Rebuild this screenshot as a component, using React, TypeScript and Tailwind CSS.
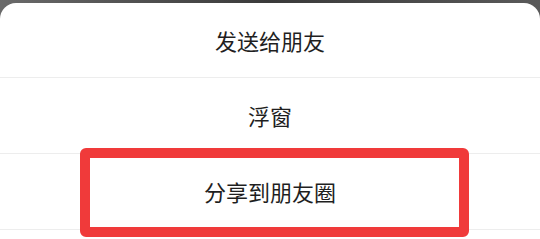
import React from 'react';

const items = ['发送给朋友', '浮窗', '分享到朋友圈'];

export default function App() {
  return (
    <div
      className="relative w-[540px] h-[239px] overflow-hidden bg-gradient-to-r from-[#6a6a6a] via-[#3a3a3a] to-[#5a5a5a]"
      style={{ fontFamily: '"Noto Sans CJK SC", "Noto Sans", sans-serif' }}
    >
      <div className="mt-[3px] h-[236px] bg-white rounded-t-[16px]">
        {items.map((label, i) => (
          <div
            key={label}
            className={`flex items-center justify-center text-[22px] text-[#1f1f1f] border-b border-[#ededed] ${
              i === 0 ? 'h-[75px]' : 'h-[76px]'
            }`}
          >
            {label}
          </div>
        ))}
      </div>

      {/* red highlight annotation */}
      <div className="absolute left-[80px] top-[148px] w-[389px] h-[89px] border-[10px] border-[#f03a3a] rounded-[6px]" />
    </div>
  );
}
